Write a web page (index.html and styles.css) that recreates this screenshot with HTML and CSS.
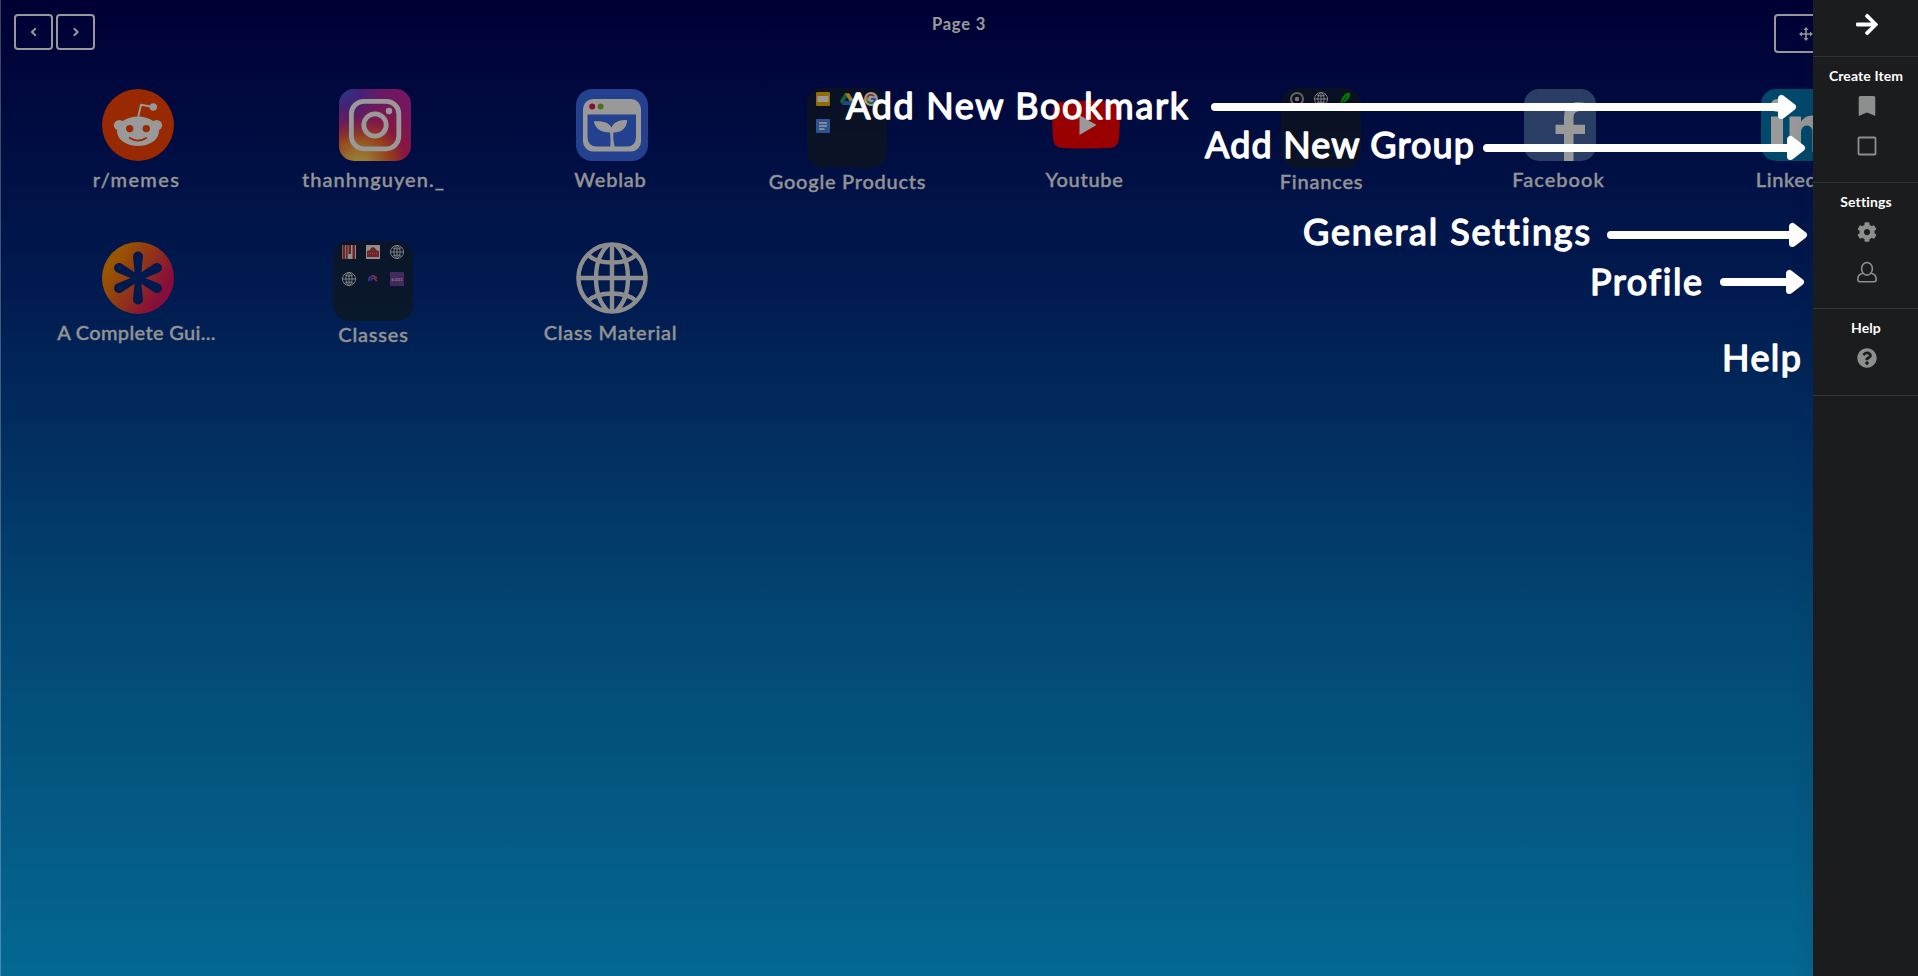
FILE: index.html
```html
<!DOCTYPE html>
<html lang="en">
<head>
<meta charset="utf-8">
<title>Page 3</title>
<link rel="stylesheet" href="styles.css">
</head>
<body>
<svg class="defs" width="0" height="0">
  <defs>
    <symbol id="globe" viewBox="0 0 72 72">
      <g fill="none" stroke="#ececec" stroke-width="4.4">
        <circle cx="36" cy="36" r="33.6"/>
        <path d="M36 2v68M2 36h68"/>
        <path d="M32 3C16 18 16 54 32 69M40 3C56 18 56 54 40 69"/>
        <path d="M12 13C22 23 50 23 60 13M12 59C22 49 50 49 60 59"/>
      </g>
    </symbol>
    <linearGradient id="sun" x1="0" y1="0.2" x2="1" y2="0.8">
      <stop offset="0.15" stop-color="#ff8e00"/><stop offset="0.5" stop-color="#f0552c"/><stop offset="0.85" stop-color="#e01464"/>
    </linearGradient>
    <radialGradient id="igWarm" cx="0.28" cy="1.05" r="1">
      <stop offset="0" stop-color="#ffdd66"/><stop offset="0.15" stop-color="#fdc34d"/><stop offset="0.45" stop-color="#f8642f"/><stop offset="0.65" stop-color="#e0266e"/><stop offset="1" stop-color="#c226a0"/>
    </radialGradient>
    <radialGradient id="igCool" cx="0.05" cy="0" r="0.75">
      <stop offset="0" stop-color="#3f65e0"/><stop offset="0.3" stop-color="#5a40d4" stop-opacity="0.85"/><stop offset="1" stop-color="#a02bb8" stop-opacity="0"/>
    </radialGradient>
  </defs>
</svg>

<div class="screen">
  <header class="topbar">
    <div class="pager">
      <button class="pager-btn"><svg width="12" height="12" viewBox="0 0 12 12"><path d="M7.800 2.300 4 6 7.800 9.700"/></svg></button>
      <button class="pager-btn"><svg width="12" height="12" viewBox="0 0 12 12"><path d="M3.800 2.300 7.600 6 3.800 9.700"/></svg></button>
    </div>
    <h1 class="page-title">Page 3</h1>
    <button class="move-btn">
      <svg width="14" height="14" viewBox="0 0 14 14"><path d="M7 1.500v11M1.500 7h11" fill="none" stroke="#fff" stroke-width="1.600"/><path d="M7 0 9.600 3H4.400zM7 14l2.600-3H4.400zM0 7l3-2.600v5.200zM14 7l-3-2.600v5.200z" fill="#fff"/></svg>
    </button>
  </header>

  <main class="grid">
    <div class="tile">
      <svg class="icon" viewBox="0 0 72 72">
        <circle cx="36" cy="36" r="36" fill="#ff4500"/>
        <g fill="#fff"><circle cx="17.300" cy="36.300" r="5.400"/><circle cx="54.700" cy="36.300" r="5.400"/><ellipse cx="36" cy="42.300" rx="21" ry="14.800"/><circle cx="51.300" cy="18" r="3.700"/></g>
        <path d="M36 29 39 15.800 51 18" fill="none" stroke="#fff" stroke-width="1.900" stroke-linejoin="round"/>
        <circle cx="27.700" cy="39.600" r="3.700" fill="#ff4500"/><circle cx="44.300" cy="39.600" r="3.700" fill="#ff4500"/>
        <path d="M27.800 49q8.200 5.200 16.400 0" fill="none" stroke="#ff4500" stroke-width="1.900" stroke-linecap="round"/>
      </svg>
      <span class="label l-memes">r/memes</span>
    </div>
    <div class="tile">
      <svg class="icon" viewBox="0 0 72 72">
        <rect width="72" height="72" rx="15" fill="url(#igWarm)"/><rect width="72" height="72" rx="15" fill="url(#igCool)"/>
        <g fill="none" stroke="#fff" stroke-width="4.800"><rect x="12.400" y="12.400" width="47.400" height="47.400" rx="12.500"/><circle cx="36" cy="36" r="11.200"/></g>
        <circle cx="50" cy="22" r="3.200" fill="#fff"/>
      </svg>
      <span class="label l-thanh">thanhnguyen._</span>
    </div>
    <div class="tile">
      <svg class="icon" viewBox="0 0 72 72">
        <rect width="72" height="72" rx="16" fill="#3c6df0"/>
        <rect x="7" y="10" width="58" height="52.500" rx="10" fill="#fff"/>
        <path d="M11.500 25.500h48.500V48q0 9.500-9.500 9.500H21q-9.500 0-9.500-9.500z" fill="#3c6df0"/>
        <circle cx="16.200" cy="17.500" r="3" fill="#e8144f"/><circle cx="24.600" cy="17.500" r="3" fill="#7fb83c"/>
        <path d="M34.300 58.500Q34.800 48 34 43.500C25 43.500 19.500 40 17.800 32.300 27 31.500 33 33.500 35.500 38.500 38 33.500 43 30.500 51.200 31.200 50.500 39 46 43.500 37.300 43.500Q36.700 50 38.800 58.500z" fill="#fff"/>
      </svg>
      <span class="label l-weblab">Weblab</span>
    </div>
    <div class="tile">
      <div class="folder">
        <svg viewBox="0 0 14 14"><rect width="14" height="14" rx="1" fill="#f4b400"/><rect x="1.500" y="4" width="11" height="6" fill="#fff"/></svg>
        <svg viewBox="0 0 14 14"><path d="M4.700 1.200h4.600L14 9H9.400z" fill="#ffcf48"/><path d="M4.700 1.200 7 5 2.300 13 0 9z" fill="#11a861"/><path d="M4.600 9H14l-2.300 4H2.300z" fill="#2f7bed"/></svg>
        <svg viewBox="0 0 14 14"><circle cx="7" cy="7" r="7" fill="#fff"/><g fill="none" stroke-width="1.800"><path d="M10 4.200A4 4 0 0 0 3.500 5" stroke="#ea4335"/><path d="M3.500 5a4 4 0 0 0 0 4" stroke="#fbbc05"/><path d="M3.500 9A4 4 0 0 0 9.700 10" stroke="#34a853"/><path d="M9.700 10A4 4 0 0 0 11 7H7" stroke="#4285f4"/></g></svg>
        <svg viewBox="0 0 14 14"><rect width="14" height="14" rx="1" fill="#4a8af4"/><path d="M3 4h8M3 7h8M3 10h5.500" stroke="#fff" stroke-width="1.300"/></svg>
      </div>
      <span class="label l-google">Google Products</span>
    </div>
    <div class="tile">
      <svg class="icon" viewBox="0 0 72 72">
        <path d="M11 13Q36 10.500 61 13 68.500 13.500 69 21 70.500 35 69 50 68 58 61 58.700 36 60.500 11 58.700 4 58 3 50 1.500 35 3 21 3.500 13.500 11 13z" fill="#f00"/>
        <path d="M29.500 26v20L46.500 36z" fill="#fff"/>
      </svg>
      <span class="label l-youtube">Youtube</span>
    </div>
    <div class="tile">
      <div class="folder">
        <svg viewBox="0 0 14 14"><circle cx="7" cy="7" r="6" fill="none" stroke="#aaa69c" stroke-width="2"/><circle cx="7" cy="7" r="2.200" fill="#c4c0b8"/></svg>
        <svg viewBox="0 0 14 14"><use href="#globe"/></svg>
        <svg viewBox="0 0 14 14"><path d="M2.500 13Q2 7 7 2.200 9 .3 12 1 12.500 5 9 8.500 6 11 3.500 11z" fill="#00c805"/><path d="M2.500 13 9 4" stroke="#053b1e" stroke-width=".8"/></svg>
      </div>
      <span class="label l-finances">Finances</span>
    </div>
    <div class="tile">
      <svg class="icon" viewBox="0 0 72 72">
        <rect width="72" height="72" rx="15" fill="#4567a8"/>
        <path d="M40 72V45H31.500V35.700H40V29Q40 13.800 54 13.300 58 13.200 61 14V22H56Q49.500 22 49.500 28.500V35.700H61V45H49.500V72z" fill="#fff"/>
      </svg>
      <span class="label l-facebook">Facebook</span>
    </div>
    <div class="tile">
      <svg class="icon" viewBox="0 0 72 72">
        <rect width="72" height="72" rx="15" fill="#007bb6"/>
        <g fill="#fff"><circle cx="16" cy="16.500" r="6.500"/><path d="M10 27.500h12V63H10zM28.500 27.500H40v5Q44 26.500 51 26.500 63 27 63 42V63H51.500V44Q51.500 36.500 46 36.500 40 36.500 40 44V63H28.500z"/></g>
      </svg>
      <span class="label l-linkedin">LinkedIn</span>
    </div>
    <div class="tile">
      <svg class="icon" viewBox="0 0 72 72">
        <circle cx="36" cy="36" r="36" fill="url(#sun)"/>
        <g fill="#022a80">
          <g id="petals"><path d="M33.200 36 31 14.500A5 5 0 0 1 41 14.500L38.800 36 41 57.500A5 5 0 0 1 31 57.500z"/></g>
          <use href="#petals" transform="rotate(62 36 36)"/><use href="#petals" transform="rotate(-62 36 36)"/>
          <circle cx="36" cy="36" r="6.500"/>
        </g>
      </svg>
      <span class="label l-guide">A Complete Gui...</span>
    </div>
    <div class="tile">
      <div class="folder">
        <svg viewBox="0 0 14 14"><rect width="14" height="14" fill="#f4f0ea"/><path d="M.5 0h2.700v14H.5zM4 0h1.700v14H4zM10.500 0H13v14h-2.500zM6.500 0h2.500v9H6.500z" fill="#b0383c"/></svg>
        <svg viewBox="0 0 14 14"><rect width="14" height="14" fill="#f6ece6"/><path d="M1 12V6l3-1q0-2 3-3 3 1 3 3l3 1v6z" fill="#b83c44"/><path d="M2 8.500h10" stroke="#e8a8a8" stroke-width=".7" stroke-dasharray="1 1"/></svg>
        <svg viewBox="0 0 14 14"><use href="#globe"/></svg>
        <svg viewBox="0 0 14 14"><use href="#globe"/></svg>
        <svg viewBox="0 0 14 14"><g fill="none" stroke-width="1.700"><path d="M3 9.500V6L7 3.500" stroke="#6a52e8"/><path d="M5 8.500 6 6.500 8 6" stroke="#4c62ea"/><path d="M7 3.500 11 6M7.500 6 11 9" stroke="#e0407c"/></g></svg>
        <svg viewBox="0 0 14 14"><rect width="14" height="14" fill="#70459c"/><text x="7" y="8.700" text-anchor="middle" class="course">6.031</text></svg>
      </div>
      <span class="label l-classes">Classes</span>
    </div>
    <div class="tile">
      <svg class="icon" viewBox="0 0 72 72"><use href="#globe"/></svg>
      <span class="label l-material">Class Material</span>
    </div>
  </main>
  <div class="dimmer"></div>
</div>

<svg class="notes" width="1918" height="976" viewBox="0 0 1918 976">
  <g class="note-text">
    <text x="846" y="118.600" textLength="342">Add New Bookmark</text>
    <text x="1205" y="158.300" textLength="269">Add New Group</text>
    <text x="1303" y="245" textLength="287">General Settings</text>
    <text x="1590" y="294.500" textLength="112">Profile</text>
    <text x="1722" y="371" textLength="79">Help</text>
  </g>
  <g class="arrows">
    <path d="M1215 107H1780M1487 148H1789M1611 235H1791M1724 282H1788"/>
    <g class="heads">
      <path d="M1781.500 98.500v17L1792.500 107z"/>
      <path d="M1790.500 139.500v17L1801.500 148z"/>
      <path d="M1792.500 226.500v17L1803.500 235z"/>
      <path d="M1789.500 273.500v17L1800.500 282z"/>
    </g>
  </g>
</svg>

<aside class="sidebar">
  <div class="section toggle">
    <svg width="22" height="25" viewBox="0 0 448 512"><path fill="#fff" d="M190.500 66.900l22.200-22.200c9.400-9.400 24.600-9.400 33.900 0L441 239c9.400 9.400 9.400 24.600 0 33.900L246.600 467.300c-9.400 9.400-24.600 9.400-33.900 0l-22.200-22.200c-9.500-9.500-9.300-25 .4-34.300L311.400 296H24c-13.300 0-24-10.700-24-24v-32c0-13.300 10.700-24 24-24h287.400L190.900 101.200c-9.800-9.300-10-24.800-.4-34.300z"/></svg>
  </div>
  <div class="section pair">
    <h2>Create Item</h2>
    <svg class="tool" viewBox="0 0 20 20"><path d="M1.700 20V1.700Q1.700 0 3.400 0H16.600Q18.300 0 18.300 1.700V20L10 16.400z"/></svg>
    <svg class="tool" viewBox="0 0 20 20"><rect x="1.500" y="1.500" width="17" height="17" rx="1" fill="none" stroke="#8d8e8e" stroke-width="1.800"/></svg>
  </div>
  <div class="section pair">
    <h2>Settings</h2>
    <svg class="tool" viewBox="0 0 512 512"><path d="M487.400 315.700l-42.600-24.600c4.300-23.200 4.300-47 0-70.200l42.600-24.600c4.900-2.800 7.100-8.600 5.500-14-11.100-35.600-30-67.800-54.700-94.600-3.800-4.100-10-5.100-14.800-2.300L380.800 110c-17.900-15.400-38.500-27.300-60.800-35.100V25.800c0-5.600-3.900-10.500-9.400-11.700-36.700-8.200-74.300-7.800-109.200 0-5.500 1.200-9.400 6.100-9.400 11.700V75c-22.200 7.900-42.800 19.800-60.800 35.100L88.700 85.500c-4.900-2.800-11-1.900-14.800 2.300-24.700 26.700-43.600 58.900-54.700 94.600-1.700 5.400.6 11.200 5.500 14L67.300 221c-4.300 23.200-4.300 47 0 70.200l-42.600 24.600c-4.900 2.800-7.100 8.600-5.500 14 11.100 35.600 30 67.800 54.700 94.600 3.800 4.100 10 5.100 14.800 2.300l42.600-24.600c17.900 15.400 38.500 27.300 60.800 35.100v49.200c0 5.600 3.900 10.500 9.400 11.700 36.700 8.200 74.300 7.800 109.200 0 5.500-1.200 9.400-6.100 9.400-11.700v-49.200c22.200-7.900 42.800-19.800 60.800-35.100l42.600 24.600c4.900 2.800 11 1.900 14.800-2.300 24.700-26.700 43.600-58.900 54.700-94.600 1.500-5.500-.7-11.300-5.600-14.100zM256 336c-44.100 0-80-35.900-80-80s35.900-80 80-80 80 35.900 80 80-35.900 80-80 80z"/></svg>
    <svg class="tool" viewBox="0 0 20 20"><g fill="none" stroke="#8d8e8e" stroke-width="1.600"><ellipse cx="10" cy="6.800" rx="5.400" ry="6.300"/><path d="M5.800 11.300Q.8 12.500.8 17.200.8 19.700 3 19.700H17Q19.200 19.700 19.200 17.200 19.200 12.500 14.200 11.300"/></g></svg>
  </div>
  <div class="section single">
    <h2>Help</h2>
    <svg class="tool" viewBox="0 0 512 512"><path d="M504 256c0 136.997-111.043 248-248 248S8 392.997 8 256C8 119.083 119.043 8 256 8s248 111.083 248 248zM262.655 90c-54.497 0-89.255 22.957-116.549 63.758-3.536 5.286-2.353 12.415 2.715 16.258l34.699 26.310c5.205 3.947 12.621 3.008 16.665-2.122 17.864-22.658 30.113-35.797 57.303-35.797 20.429 0 45.698 13.148 45.698 32.958 0 14.976-12.363 22.667-32.534 33.976C247.128 238.528 216 254.941 216 296v4c0 6.627 5.373 12 12 12h56c6.627 0 12-5.373 12-12v-1.333c0-28.462 83.186-29.647 83.186-106.667 0-58.002-60.165-102-116.531-102zM256 338c-25.365 0-46 20.635-46 46 0 25.364 20.635 46 46 46s46-20.636 46-46c0-25.365-20.635-46-46-46z"/></svg>
  </div>
</aside>
</body>
</html>
```
FILE: styles.css
```css
* { box-sizing: border-box; }
body {
  margin: 0;
  width: 1918px;
  height: 976px;
  overflow: hidden;
  position: relative;
  font-family: "Lato", "Open Sans", sans-serif;
}
.defs { position: absolute; }

.screen {
  position: relative;
  width: 1918px;
  height: 976px;
  padding-left: 1px;
  background: linear-gradient(#000058, #022f86 31%, #0677c2 64%, #08aef3);
  overflow: hidden;
}
.dimmer {
  position: absolute;
  inset: 0;
  background: rgba(0, 0, 0, .4);
  border-left: 1px solid rgba(255, 255, 255, .25);
}

.topbar {
  display: grid;
  grid-template-columns: 1fr 1fr 1fr;
  height: 88px;
  padding: 14px 0 0 13px;
  align-items: start;
}
.pager { display: flex; gap: 3px; }
.pager-btn, .move-btn {
  display: flex;
  align-items: center;
  justify-content: center;
  background: none;
  border: 2px solid #fff;
  border-radius: 4px;
  padding: 0;
}
.pager-btn { width: 39px; height: 36px; }
.pager-btn svg { fill: none; stroke: #fff; stroke-width: 2; }
.move-btn { justify-self: end; width: 64px; height: 39px; margin-right: 80px; }
.page-title {
  margin: 0 14px 0 0;
  color: #fff;
  font-size: 16.500px;
  font-weight: 700;
  line-height: 20px;
  letter-spacing: .8px;
  text-align: center;
}

.grid {
  display: grid;
  grid-template-columns: repeat(8, 237px);
  grid-auto-rows: 153px;
  padding-left: 16.500px;
}
.tile { display: flex; flex-direction: column; align-items: center; }
.icon { width: 72px; height: 72px; margin: 1px 0 0 4px; flex: none; }
.folder {
  display: grid;
  grid-template-columns: repeat(3, 14px);
  grid-auto-rows: 14px;
  gap: 13px 10px;
  align-content: start;
  justify-content: center;
  width: 80px;
  height: 80px;
  padding-top: 4px;
  border-radius: 16px;
  background: rgba(27, 36, 36, .62);
}
.folder svg { width: 14px; height: 14px; }
.course { font: 700 4.500px "Lato", sans-serif; fill: #d8c8e8; }
.label {
  color: #f6f6f6;
  font-size: 20px;
  font-weight: 500;
  line-height: 24px;
  letter-spacing: .8px;
  margin: 6px 0 0 1px;
  white-space: nowrap;
  -webkit-text-stroke: .3px #f6f6f6;
}
.folder + .label { margin-top: 1px; }
.l-memes { letter-spacing: 1.350px; }
.l-thanh { letter-spacing: 1.050px; }
.l-google { letter-spacing: .750px; }
.l-youtube { letter-spacing: .700px; }
.l-facebook { letter-spacing: 1.050px; }
.l-linkedin { letter-spacing: .600px; }
.l-guide { letter-spacing: .330px; }
.l-material { letter-spacing: .720px; }

.notes { position: absolute; left: 0; top: 0; }
.note-text {
  font-family: "Lato", sans-serif;
  font-size: 36px;
  font-weight: 400;
  font-variant-ligatures: none;
  fill: #fff;
  stroke: #fff;
  stroke-width: 1.400px;
  stroke-linejoin: round;
}
.arrows { fill: none; stroke: #fff; stroke-width: 8; stroke-linecap: round; stroke-linejoin: round; }
.heads { fill: #fff; stroke-width: 7; }

.sidebar {
  position: absolute;
  top: 0;
  right: 0;
  width: 105px;
  height: 976px;
  background: #1b1c1d;
  box-shadow: 0 0 20px rgba(34, 36, 38, .15);
}
.section {
  display: flex;
  flex-direction: column;
  align-items: center;
  border-bottom: 1px solid #323334;
}
.toggle { height: 57px; padding-top: 12px; padding-left: 2px; }
.pair { height: 126px; }
.single { height: 87px; }
.section h2 {
  margin: 9px 0 10px 1px;
  color: #fff;
  font-size: 14px;
  font-weight: 700;
  line-height: 20px;
  letter-spacing: .1px;
  font-variant-ligatures: none;
}
.tool { width: 20px; height: 20px; margin: 0 0 20px 2px; fill: #8d8e8e; overflow: visible; }
```
